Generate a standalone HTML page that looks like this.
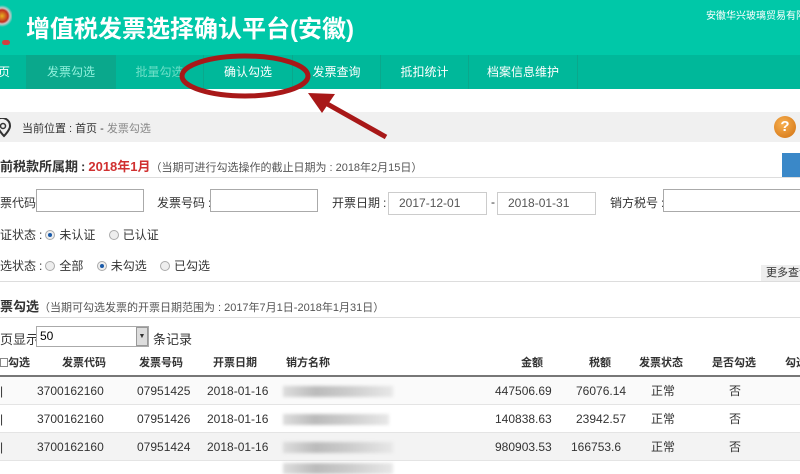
<!DOCTYPE html>
<html><head><meta charset="utf-8"><style>
*{margin:0;padding:0;box-sizing:border-box}
body{width:800px;height:468px;overflow:hidden;position:relative;background:#fff;font-family:"Liberation Sans","Noto Sans CJK SC",sans-serif;font-size:12px;color:#333}
.a{position:absolute;white-space:nowrap}
.hdr{left:0;top:0;width:800px;height:55px;background:#00c8a8}
.nav{left:0;top:55px;width:800px;height:34px;background:#00b89a}
.nav span{position:absolute;top:0;height:34px;line-height:34px;color:#fff;font-size:12px;text-align:center;border-right:1px solid #0aa88c}
.inp{position:absolute;height:23px;border:1px solid #aaa;background:#fff;font-size:12px;line-height:21px;padding-left:10px;color:#555}
.radio{display:inline-block;width:10px;height:10px;border-radius:50%;border:1px solid #aaa;background:#eee;vertical-align:-1px;margin-right:4px;position:relative}
.radio.on::after{content:"";position:absolute;left:2px;top:2px;width:4px;height:4px;border-radius:50%;background:#1a5aa8}
.hr{position:absolute;left:0;width:800px;height:1px;background:#ddd}
.row{position:absolute;left:0;width:800px;height:28px;border-bottom:1px solid #e4e4e4}
.row span{position:absolute;top:0;line-height:28px;font-size:12px;color:#333}
.blur{position:absolute;top:9px;height:11px;background:linear-gradient(90deg,#ddd,#bbb 30%,#ccc 60%,#e8e8e8);filter:blur(1.5px)}
.c{padding:0 3px}
</style></head><body>
<div class="a hdr"></div>
<div class="a" style="left:0;top:4px;width:12px;height:34px;background:radial-gradient(circle at 2px 12px,#e8b020 0,#c03020 6px,#c8c8c8 8px,transparent 11px)"></div>
<div class="a" style="left:2px;top:40px;width:8px;height:5px;background:#d04040;border-radius:3px"></div>
<div class="a" style="left:26px;top:9px;font-size:24px;font-weight:bold;color:#fff">增值税发票选择确认平台(安徽)</div>
<div class="a" style="left:706px;top:7px;font-size:10px;color:#fff">安徽华兴玻璃贸易有限公</div>
<div class="a nav">
<span style="left:-30px;width:57px">首页</span>
<span style="left:27px;width:89px;background:#0aa88c;color:#8ff0dc">发票勾选</span>
<span style="left:116px;width:88px;color:#6de0c8">批量勾选</span>
<span style="left:204px;width:89px">确认勾选</span>
<span style="left:293px;width:88px">发票查询</span>
<span style="left:381px;width:88px">抵扣统计</span>
<span style="left:469px;width:109px">档案信息维护</span>
</div>
<div class="a" style="left:0;top:112px;width:800px;height:30px;background:#f0f0f0"></div>
<svg class="a" style="left:0;top:118px" width="14" height="20"><path d="M-2 1a8 8 0 0 1 12 7c0 4-6 10-6 10s-6-6-6-10" fill="none" stroke="#333" stroke-width="2"/><circle cx="3" cy="8" r="2.5" fill="none" stroke="#333" stroke-width="1.5"/></svg>
<div class="a" style="left:22px;top:120px;font-size:11px;color:#333">当前位置<span class="c">:</span>首页 - <span style="color:#888">发票勾选</span></div>
<div class="a" style="left:774px;top:116px;width:22px;height:22px;border-radius:50%;background:radial-gradient(circle at 40% 35%,#f8b050,#d07010);color:#fff;font-weight:bold;font-size:15px;text-align:center;line-height:22px">?</div>
<div class="a" style="left:0;top:156px;font-size:13px;font-weight:bold;color:#333">前税款所属期<span class="c">:</span><span style="color:#d03030">2018年1月</span><span style="font-weight:normal;font-size:11px;color:#555">（当期可进行勾选操作的截止日期为<span class="c">:</span>2018年2月15日）</span></div>
<div class="a" style="left:782px;top:153px;width:18px;height:24px;background:#3a88c8"></div>
<div class="hr" style="top:177px"></div>
<div class="a" style="left:0;top:194px">票代码<span class="c">:</span></div>
<div class="inp" style="left:36px;top:189px;width:108px"></div>
<div class="a" style="left:157px;top:194px">发票号码<span class="c">:</span></div>
<div class="inp" style="left:210px;top:189px;width:108px"></div>
<div class="a" style="left:332px;top:194px">开票日期<span class="c">:</span></div>
<div class="inp" style="left:388px;top:192px;width:99px;border-color:#ccc">2017-12-01</div>
<div class="a" style="left:491px;top:195px">-</div>
<div class="inp" style="left:497px;top:192px;width:99px;border-color:#ccc">2018-01-31</div>
<div class="a" style="left:610px;top:194px">销方税号<span class="c">:</span></div>
<div class="inp" style="left:663px;top:189px;width:140px"></div>
<div class="a" style="left:0;top:226px">证状态<span class="c">:</span><span class="radio on"></span>未认证&nbsp;&nbsp;&nbsp;&nbsp;<span class="radio"></span>已认证</div>
<div class="a" style="left:0;top:257px">选状态<span class="c">:</span><span class="radio"></span>全部&nbsp;&nbsp;&nbsp;&nbsp;<span class="radio on"></span>未勾选&nbsp;&nbsp;&nbsp;&nbsp;<span class="radio"></span>已勾选</div>
<div class="a" style="left:761px;top:265px;width:40px;height:16px;background:#eee;font-size:11px;line-height:16px;padding-left:5px">更多查询</div>
<div class="hr" style="top:281px"></div>
<div class="a" style="left:0;top:296px;font-size:13px;font-weight:bold">票勾选<span style="font-weight:normal;font-size:11px;color:#555">（当期可勾选发票的开票日期范围为<span class="c">:</span>2017年7月1日-2018年1月31日）</span></div>
<div class="hr" style="top:317px"></div>
<div class="a" style="left:0;top:329px;font-size:13px">页显示</div>
<div class="inp" style="left:36px;top:326px;width:113px;height:21px;padding-left:3px;line-height:19px;color:#000">50</div>
<div class="a" style="left:136px;top:327px;width:12px;height:19px;background:#ddd;border:1px solid #999;font-size:7px;text-align:center;line-height:17px">▼</div>
<div class="a" style="left:153px;top:329px;font-size:13px">条记录</div>
<div class="a" style="left:0;top:354px;width:800px;font-size:11px;font-weight:bold;color:#333">
<span class="a" style="left:0;top:0"><span style="display:inline-block;width:8px;height:9px;border:1px solid #888;vertical-align:-1px"></span>勾选</span>
<span class="a" style="left:62px">发票代码</span><span class="a" style="left:139px">发票号码</span><span class="a" style="left:213px">开票日期</span><span class="a" style="left:286px">销方名称</span><span class="a" style="left:521px">金额</span><span class="a" style="left:589px">税额</span><span class="a" style="left:639px">发票状态</span><span class="a" style="left:712px">是否勾选</span><span class="a" style="left:785px">勾选</span></div>
<div class="a" style="left:0;top:375px;width:800px;height:2px;background:#777"></div>
<div class="row" style="top:377px;background:#fafafa"><span style="left:0">|</span><span style="left:37px">3700162160</span><span style="left:137px">07951425</span><span style="left:207px">2018-01-16</span><div class="blur" style="left:283px;width:110px"></div><span style="left:495px">447506.69</span><span style="left:576px">76076.14</span><span style="left:651px">正常</span><span style="left:729px">否</span></div>
<div class="row" style="top:405px;background:#fff"><span style="left:0">|</span><span style="left:37px">3700162160</span><span style="left:137px">07951426</span><span style="left:207px">2018-01-16</span><div class="blur" style="left:283px;width:106px"></div><span style="left:495px">140838.63</span><span style="left:576px">23942.57</span><span style="left:651px">正常</span><span style="left:729px">否</span></div>
<div class="row" style="top:433px;background:#f3f3f3"><span style="left:0">|</span><span style="left:37px">3700162160</span><span style="left:137px">07951424</span><span style="left:207px">2018-01-16</span><div class="blur" style="left:283px;width:110px"></div><span style="left:495px">980903.53</span><span style="left:571px">166753.6</span><span style="left:651px">正常</span><span style="left:729px">否</span></div>
<div class="blur" style="left:283px;top:463px;width:110px"></div>
<svg class="a" style="left:0;top:0" width="800" height="468">
<ellipse cx="245" cy="76" rx="63" ry="20" fill="none" stroke="#a81818" stroke-width="5"/>
<line x1="386" y1="137" x2="322" y2="101" stroke="#a81818" stroke-width="5"/>
<polygon points="308,93 335,94 322,113" fill="#a81818"/>
</svg>
</body></html>
